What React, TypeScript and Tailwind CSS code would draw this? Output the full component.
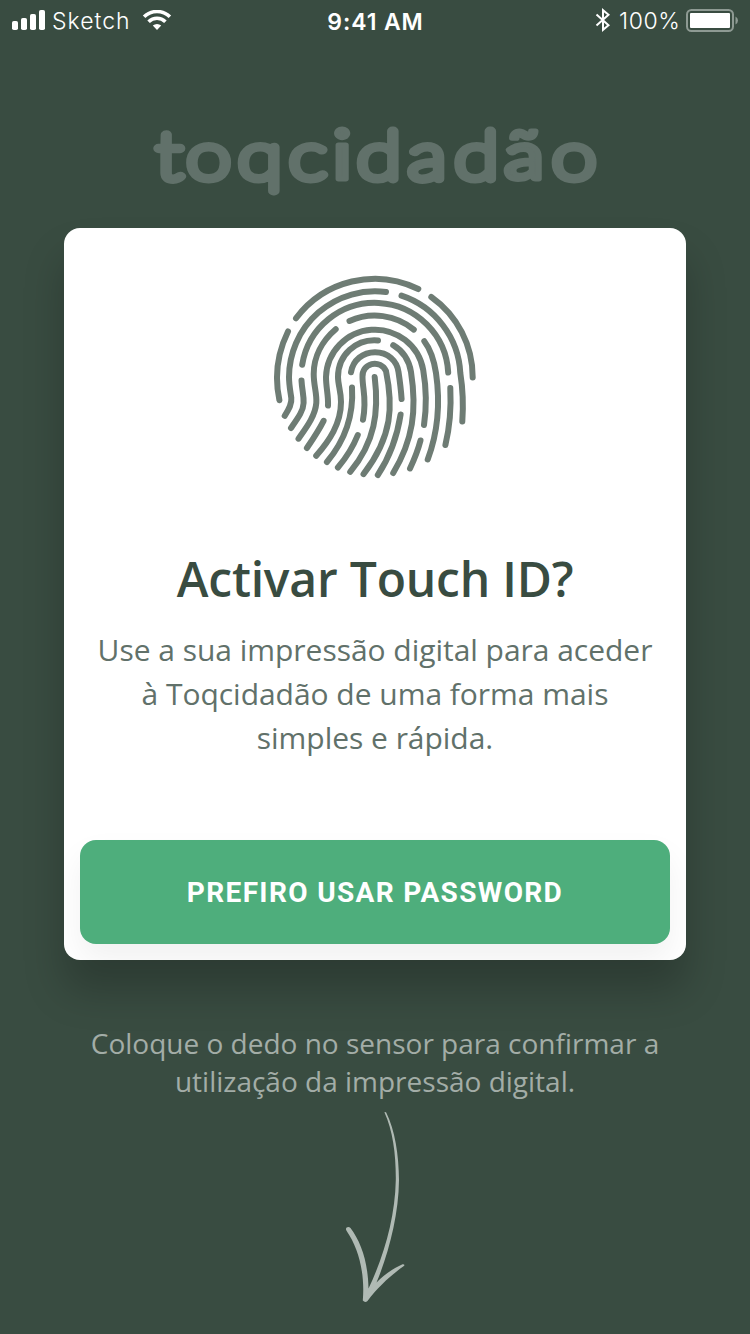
const ridges = [
  "M296 318.3A98.3 98.3 0 0 1 418.3 289",
  "M431.3 297A98.3 98.3 0 0 1 472.7 377.5",
  "M288 331.5C278 352 274 375 279.4 400.2",
  "M386 292A86 86 0 0 0 289 377C289 385 290.5 392 291.3 398C292 404 289 409 284.7 415.8",
  "M401.5 295.7A86 86 0 0 1 460.3 373C463 390 463.5 405 462.3 421.5",
  "M302.2 364.8A73.5 73.5 0 0 1 448.2 372.5",
  "M301.5 380.5C302 390 303.9 395 303.6 403C303.3 411 298 418 291 428",
  "M450.3 388C451.3 408 449.5 428 445.4 445",
  "M335.7 329.3C322 341 313.7 357 313.7 374C313.7 386 317 393 316.3 403C315.3 416 306 428 298.5 438.7",
  "M349.5 321A61.4 61.4 0 0 1 413.8 329.6",
  "M424.3 341.2C431 350 434 360 436 373C440.5 404 438 432 427.7 459.5",
  "M328 405.5C328.5 395 326 388 326 377A49 49 0 0 1 423.2 370C427 392 426.5 408 424 425",
  "M420.5 440.5C418 450 414 460 410 468.5",
  "M323.6 420.8C319 430 313 439 306.9 448",
  "M378 340.4C356 338.5 338 355 338 377C338 385 341 391 341 402C341 424 329 441 316.2 455.8",
  "M393.2 345.2C403 351 409 360 411 372C417 410 413 440 393.2 473",
  "M351 372.3C353 360 363 352.3 375 352.3C388 352.3 397 361 398.5 372C400 382 401 390 401.6 399",
  "M352 387.5C354 420 342 444 326.9 462",
  "M363 419.7C367 398 362.5 390 362.5 377A12.3 12.3 0 0 1 386 371C393 405 393 436 363.5 474.2",
  "M374.7 377C379 412 375 442 350.2 471.8",
  "M400.6 414.5C397 438 389 458 377.8 475",
  "M357.8 435C353 447 346 458 337.9 467.5",
];

function StatusBar() {
  return (
    <header className="flex h-10 items-center justify-between pr-[11px] pl-3 font-['Inter',sans-serif] text-[23px] text-white">
      <div className="flex w-[280px] items-center">
        <svg className="h-5 w-[33px]" viewBox="0 0 33 20" fill="currentColor">
          <rect x="0" y="11" width="6" height="9" rx="1.8" />
          <rect x="9" y="8" width="6" height="12" rx="1.8" />
          <rect x="18" y="4" width="6" height="16" rx="1.8" />
          <rect x="27" y="0" width="6" height="20" rx="1.8" />
        </svg>
        <span className="ml-[7px] w-[78px] pt-px leading-[28px] font-[350] tracking-[1px]">Sketch</span>
        <svg className="ml-[12px] h-5 w-[30px]" viewBox="0 0 30 20" fill="none" stroke="currentColor" strokeWidth="3.6">
          <path d="M2.1 6.8A18.4 18.4 0 0 1 27.9 6.8" />
          <path d="M6.6 11.7A12 12 0 0 1 23.4 11.7" />
          <path d="M15 20L10.8 15.6A6 6 0 0 1 19.2 15.6Z" fill="currentColor" stroke="none" />
        </svg>
      </div>
      <span className="pt-[4px] font-semibold tracking-[0.9px] whitespace-nowrap">9:41 AM</span>
      <div className="flex w-[280px] items-center justify-end">
        <svg className="h-6 w-4" viewBox="0 0 16 24" fill="none" stroke="currentColor" strokeWidth="2">
          <path d="M1.5 6.5L13.5 17.2L8 21.8V2.2L13.5 6.8L1.5 17.5" />
        </svg>
        <span className="ml-[8px] w-[61px] pt-px leading-[28px] font-[350] tracking-[0.6px] whitespace-nowrap">100%</span>
        <svg className="ml-[5px] h-6 w-[54px]" viewBox="0 0 54 24">
          <rect x="2" y="2" width="46" height="21" rx="4.5" fill="none" stroke="#8e9a93" strokeWidth="2" />
          <rect x="5" y="5" width="40" height="15" rx="1" fill="#fff" />
          <path d="M50.5 8.5Q53 10 53 12.5T50.5 16.5Z" fill="#8e9a93" />
        </svg>
      </div>
    </header>
  );
}

const brandLetters: [string, number][] = [
  ["t", 156],
  ["o", 186.5],
  ["q", 238],
  ["c", 289],
  ["i", 332.5],
  ["d", 357],
  ["a", 408],
  ["d", 454.5],
  ["ã", 504],
  ["o", 552],
];

function Brand() {
  return (
    <svg
      className="mt-[70px] h-[100px] w-[470px] self-center overflow-visible"
      viewBox="140 110 470 100"
      fill="#61716a"
      stroke="#61716a"
      strokeWidth="8.8"
      strokeLinejoin="round"
    >
      <text
        transform="scale(1.2 1)"
        x={brandLetters.map(([, x]) => (x / 1.2).toFixed(2)).join(" ")}
        y="179.3"
        className="font-['Lato',sans-serif] text-[67px] font-thin"
      >
        toqc
        <tspan className="font-normal" strokeWidth="5">i</tspan>
        dad
        <tspan className="font-normal" strokeWidth="5">ã</tspan>
        o
      </text>
    </svg>
  );
}

export default function App() {
  return (
    <main className="flex h-[1334px] w-[750px] flex-col overflow-hidden bg-[#394c41] font-['Open_Sans',sans-serif]">
      <StatusBar />
      <Brand />
      <section className="mx-16 mt-[18px] flex h-[732px] shrink-0 flex-col items-center overflow-hidden rounded-[16px] bg-white px-4 pb-4 text-center shadow-[0_30px_40px_rgba(0,0,0,0.22)]">
        <svg
          className="mt-[42px] h-[212px] w-[210px] shrink-0"
          viewBox="270 270 210 212"
          fill="none"
          stroke="#6e7c74"
          strokeWidth="6"
          strokeLinecap="round"
        >
          {ridges.map((d) => (
            <path key={d} d={d} />
          ))}
        </svg>
        <h1 className="mt-[64px] text-[48px] leading-[66px] font-semibold tracking-[-0.2px] whitespace-nowrap text-[#394c41]">
          Activar Touch ID?
        </h1>
        <p className="mt-[16px] text-[30px] leading-[44px] tracking-[-0.03px] whitespace-nowrap text-[#61716a]">
          Use a sua impressão digital para aceder
          <br />à Toqcidadão de uma forma mais
          <br />
          simples e rápida.
        </p>
        <div className="mt-auto w-full">
          <button className="flex h-[104px] w-full items-center justify-center rounded-[16px] bg-[#4eae7c] pt-px font-['Roboto',sans-serif] text-[28px] font-bold tracking-[1.35px] text-white shadow-[0_16px_32px_rgba(0,0,0,0.06)]">
            PREFIRO USAR PASSWORD
          </button>
        </div>
      </section>
      <p className="mt-[64px] text-center text-[28px] leading-[38px] whitespace-nowrap text-[#a3ada7]">
        Coloque o dedo no sensor para confirmar a
        <br />
        utilização da impressão digital.
      </p>
      <svg className="ml-[330px] h-[220px] w-[90px] shrink-0" viewBox="330 1100 90 220" fill="#b0bab4">
        <path d="M384.4 1112.3Q385.3 1111.4 386.2 1112.5C395 1130 398.8 1155 399 1180C398.7 1216 388 1255 376.5 1282.5C384 1275 393 1268.5 402.5 1264.2Q405 1264 404.2 1265.7C390 1276 378 1287 367.5 1301Q365 1303 362.8 1300.5C365 1274 359 1249 346.5 1230.8C344.5 1227.5 348.5 1225.5 350.5 1228C361 1242 368 1262 368.5 1288.5C384 1256 395 1218 395.8 1180C396 1155 393 1131 384.4 1112.3Z" />
      </svg>
    </main>
  );
}
